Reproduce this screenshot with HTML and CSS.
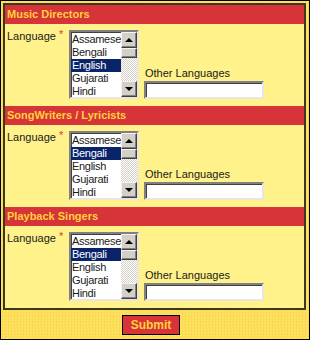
FILE: index.html
```html
<!DOCTYPE html>
<html lang="en">
<head>
    <meta charset="UTF-8">
    <title>Artist Languages</title>
    <link rel="stylesheet" href="styles.css">
</head>
<body>
    <div class="page">
        <div class="panel">

            <section class="group">
                <h2 class="group-title">Music Directors</h2>
                <div class="group-body">
                    <div class="field-label">Language <span class="req">*</span></div>
                    <div class="listbox">
                        <ul class="options">
                            <li>Assamese</li>
                            <li>Bengali</li>
                            <li class="selected">English</li>
                            <li>Gujarati</li>
                            <li>Hindi</li>
                        </ul>
                        <div class="scrollbar">
                            <span class="sb-btn sb-up"></span>
                            <span class="sb-thumb"></span>
                            <span class="sb-track"></span>
                            <span class="sb-btn sb-down"></span>
                        </div>
                    </div>
                    <div class="other">
                        <label for="md-other">Other Languages</label>
                        <input type="text" id="md-other">
                    </div>
                </div>
            </section>

            <section class="group">
                <h2 class="group-title">SongWriters / Lyricists</h2>
                <div class="group-body">
                    <div class="field-label">Language <span class="req">*</span></div>
                    <div class="listbox">
                        <ul class="options">
                            <li>Assamese</li>
                            <li class="selected">Bengali</li>
                            <li>English</li>
                            <li>Gujarati</li>
                            <li>Hindi</li>
                        </ul>
                        <div class="scrollbar">
                            <span class="sb-btn sb-up"></span>
                            <span class="sb-thumb"></span>
                            <span class="sb-track"></span>
                            <span class="sb-btn sb-down"></span>
                        </div>
                    </div>
                    <div class="other">
                        <label for="sw-other">Other Languages</label>
                        <input type="text" id="sw-other">
                    </div>
                </div>
            </section>

            <section class="group">
                <h2 class="group-title">Playback Singers</h2>
                <div class="group-body">
                    <div class="field-label">Language <span class="req">*</span></div>
                    <div class="listbox">
                        <ul class="options">
                            <li>Assamese</li>
                            <li class="selected">Bengali</li>
                            <li>English</li>
                            <li>Gujarati</li>
                            <li>Hindi</li>
                        </ul>
                        <div class="scrollbar">
                            <span class="sb-btn sb-up"></span>
                            <span class="sb-thumb"></span>
                            <span class="sb-track"></span>
                            <span class="sb-btn sb-down"></span>
                        </div>
                    </div>
                    <div class="other">
                        <label for="ps-other">Other Languages</label>
                        <input type="text" id="ps-other">
                    </div>
                </div>
            </section>

        </div>

        <div class="actions">
            <button type="submit" class="submit">Submit</button>
        </div>
    </div>
</body>
</html>
```

FILE: styles.css
```css
* {
    box-sizing: border-box;
}

body {
    margin: 0;
    font-family: "Liberation Sans", Arial, sans-serif;
    font-size: 11px;
    color: #1a1a1a;
}

.page {
    width: 310px;
    height: 340px;
    border: 1px solid #000;
    padding: 2px 0 0 2px;
    background-color: #fde05a;
    background-image: repeating-conic-gradient(#fbd84e 0 25%, #fee567 0 50%);
    background-size: 3px 3px;
}

.panel {
    width: 303px;
    border: 2px solid #3b3826;
    background: #fff28a;
}

.group-title {
    margin: 0;
    height: 19px;
    line-height: 19px;
    padding-left: 2px;
    background: #d7343a;
    color: #ffd23a;
    font-size: 11px;
    font-weight: bold;
}

.group-body {
    display: flex;
    align-items: flex-end;
    padding: 6px 0 7px 2px;
}

.field-label {
    align-self: flex-start;
    width: 62px;
    line-height: 13px;
}

.req {
    color: #e33a2c;
    position: relative;
    top: -2px;
}

/* classic list box */
.listbox {
    display: flex;
    width: 70px;
    height: 69px;
    background: #fff;
    border: 2px solid;
    border-color: #808080 #e8e6df #e8e6df #808080;
    box-shadow: inset 1px 1px 0 #404040;
}

.options {
    flex: 1;
    min-width: 0;
    margin: 0;
    padding: 1px 0 0 0;
    list-style: none;
    overflow: hidden;
    white-space: nowrap;
}

.options li {
    height: 13px;
    line-height: 13px;
    padding-left: 1px;
    letter-spacing: -0.3px;
}

.options li.selected {
    background: #0a246a;
    color: #fff;
}

.scrollbar {
    flex: none;
    width: 16px;
    display: flex;
    flex-direction: column;
}

.sb-btn,
.sb-thumb {
    display: block;
    background: #d4d0c8;
    border: 1px solid;
    border-color: #f4f3ef #404040 #404040 #f4f3ef;
    box-shadow: inset -1px -1px 0 #808080;
    position: relative;
}

.sb-btn {
    height: 16px;
}

.sb-thumb {
    height: 10px;
}

.sb-track {
    flex: 1;
    background-color: #f2f1ec;
    background-image: repeating-conic-gradient(#d4d0c8 0 25%, #fff 0 50%);
    background-size: 2px 2px;
}

.sb-up::after,
.sb-down::after {
    content: "";
    position: absolute;
    left: 3px;
    border-left: 4px solid transparent;
    border-right: 4px solid transparent;
}

.sb-up::after {
    top: 5px;
    border-bottom: 4px solid #000;
}

.sb-down::after {
    top: 5px;
    border-top: 4px solid #000;
}

.other {
    display: flex;
    flex-direction: column;
    margin-left: 5px;
}

.other label {
    line-height: 13px;
    padding-left: 1px;
    margin-bottom: 1px;
}

.other input {
    width: 120px;
    height: 18px;
    margin: 0;
    padding: 0 2px;
    font: inherit;
    background: #fff;
    border: 2px solid;
    border-color: #808080 #e8e6df #e8e6df #808080;
    box-shadow: inset 1px 1px 0 #404040;
    outline: none;
}

.actions {
    display: flex;
    justify-content: center;
    padding: 5px 10px 0 0;
}

.submit {
    height: 20px;
    padding: 0 8px;
    background: #d7343a;
    color: #ffd23a;
    border: 1px solid #000;
    font-family: "Liberation Sans", Arial, sans-serif;
    font-size: 12px;
    font-weight: bold;
    cursor: pointer;
}
```
